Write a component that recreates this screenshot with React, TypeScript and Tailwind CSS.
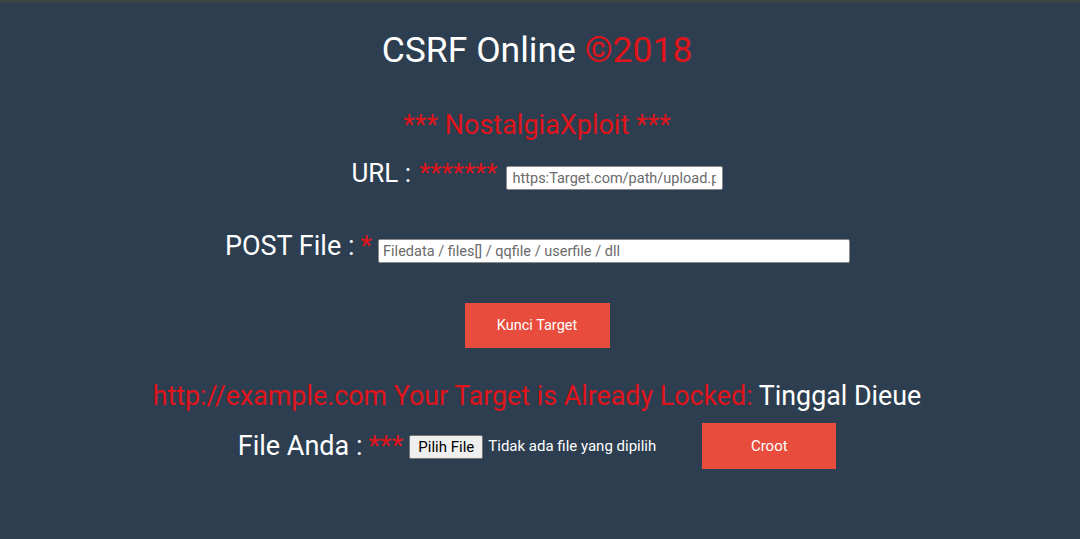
import React from "react";

const red = "text-[#e0141a]";

export default function App() {
  return (
    <div className="w-[1080px] h-[539px] overflow-hidden bg-[#2c3e50] font-['Roboto',sans-serif] flex flex-col">
      <div className="h-[3px] bg-[#3e4346] shrink-0" />
      <div className="flex flex-col items-center pr-[6px]">
        <h1 className="mt-[27px] text-[35.5px] leading-[40px] text-white">
          CSRF Online <span className={red}>©2018</span>
        </h1>
        <div className={`mt-[39px] text-[27px] leading-[32px] ${red}`}>*** NostalgiaXploit ***</div>
        <div className="mt-[15px] flex items-center">
          <span className="text-[26px] leading-[32px] text-white">URL : </span>
          <span className={`ml-[8px] text-[26px] leading-[32px] ${red}`}>*******</span>
          <input
            className="ml-[8px] mt-[10px] w-[217px] h-[24px] bg-white border border-[#8a8a8a] rounded-[2px] px-[6px] text-[14.5px] text-[#555] placeholder:text-[#6a6a6a] outline-none"
            placeholder="https:Target.com/path/upload.php"
          />
        </div>
        <div className="mt-[38px] flex items-center ml-[1px]">
          <span className="text-[27px] leading-[32px] text-white">POST File : </span>
          <span className={`ml-[6px] text-[27px] leading-[32px] ${red}`}>*</span>
          <input
            className="ml-[6px] mt-[11px] w-[472px] h-[24px] bg-white border border-[#8a8a8a] rounded-[2px] px-[4px] text-[14.5px] text-[#555] placeholder:text-[#6a6a6a] outline-none"
            placeholder="Filedata / files[] / qqfile / userfile / dll"
          />
        </div>
        <button className="mt-[40px] w-[145px] h-[45px] bg-[#e74c3c] text-white text-[14.5px]">Kunci Target</button>
        <div className="mt-[32px] text-[26.8px] leading-[32px]">
          <span className={red}>http://example.com Your Target is Already Locked: </span>
          <span className="text-white">Tinggal Dieue</span>
        </div>
        <div className="mt-[11px] flex items-center">
          <span className="text-[27px] leading-[32px] text-white">File Anda : </span>
          <span className={`ml-[6px] text-[27px] leading-[32px] ${red}`}>***</span>
          <button className="ml-[6px] mt-[1px] h-[24px] px-[8px] bg-[#efefef] border border-[#767676] rounded-[2px] text-[15px] text-black">Pilih File</button>
          <span className="ml-[5px] mt-[1px] text-[15px] text-white">Tidak ada file yang dipilih</span>
          <button className="ml-[46px] w-[134px] h-[46px] bg-[#e74c3c] text-white text-[15px]">Croot</button>
        </div>
      </div>
    </div>
  );
}
